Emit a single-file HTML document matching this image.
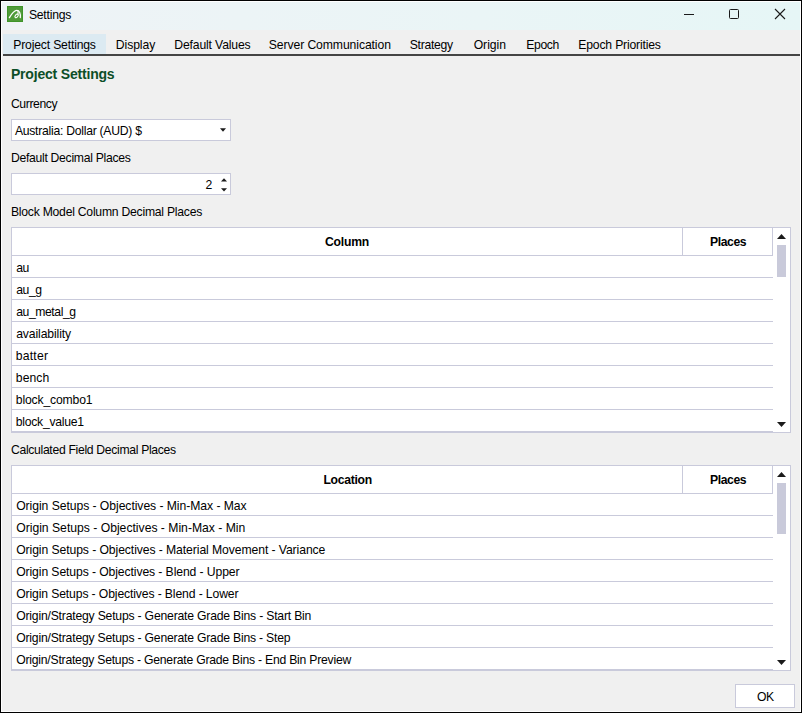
<!DOCTYPE html>
<html><head><meta charset="utf-8">
<style>
*{margin:0;padding:0;box-sizing:border-box}
html,body{width:802px;height:713px;overflow:hidden;background:#000}
body{position:relative;font-family:"Liberation Sans",sans-serif;color:#1a1a1a}
.a{position:absolute}
.t{position:absolute;white-space:nowrap;line-height:16px}
.win{position:absolute;left:1px;top:1px;width:800px;height:711px;background:#fff}
.inner{position:absolute;left:2px;top:2px;width:798px;height:709px;background:#f0f0f0}
.title{position:absolute;left:2px;top:2px;width:798px;height:28px;background:linear-gradient(90deg,#eef3f6 0%,#eaf5f6 60%,#e6f6f6 100%)}
.tabsel{position:absolute;left:3px;top:34px;width:103px;height:20px;background:#dceaf2}
.tabline{position:absolute;left:3px;top:54px;width:797px;height:2px;background:#454545}
.box{position:absolute;background:#fff;border:1px solid #c9cadb}
.hline{position:absolute;height:1px;background:#c9cadb}
.vline{position:absolute;width:1px;background:#c9cadb}
</style></head><body>
<div class="win"></div>
<div class="inner"></div>
<div class="title"></div>
<svg class="a" style="left:7px;top:6px" width="16" height="16" viewBox="0 0 16 16">
<rect x="0" y="0" width="16" height="16" fill="#4f9b39"/>
<rect x="0.5" y="0.5" width="15" height="15" fill="none" stroke="#3f942a" stroke-width="1"/>
<path d="M2.4 11.6 C4.5 8 7 4.3 9.8 4.3 C12.5 4.3 13.6 7.5 13.3 11.5" fill="none" stroke="#fff" stroke-width="1.3" stroke-linecap="round"/>
<ellipse cx="9.6" cy="9.9" rx="2.1" ry="1.25" transform="rotate(-50 9.6 9.9)" fill="none" stroke="#fff" stroke-width="1.1"/><path d="M10.9 4.8 C11.2 6 11.2 7.2 10.9 8.4" fill="none" stroke="#fff" stroke-width="1.1" stroke-linecap="round"/>
</svg>
<div class="t" style="left:28.92px;top:7.20px;font-size:12.2px;letter-spacing:-0.231px;color:#000">Settings</div>
<div class="a" style="left:684px;top:14px;width:10px;height:1px;background:#1a1a1a"></div>
<div class="a" style="left:729px;top:9px;width:10px;height:10px;border:1px solid #1a1a1a;border-radius:1.5px"></div>
<svg class="a" style="left:774px;top:8px" width="12" height="12" viewBox="0 0 12 12"><path d="M1 1 L11 11 M11 1 L1 11" stroke="#1a1a1a" stroke-width="1.1"/></svg>

<div class="tabsel"></div>
<div class="tabline"></div>
<div class="t" style="left:13.30px;top:36.60px;font-size:12.2px;letter-spacing:-0.180px;color:#000">Project Settings</div>
<div class="t" style="left:115.82px;top:36.60px;font-size:12.2px;letter-spacing:-0.090px;color:#000">Display</div>
<div class="t" style="left:174.30px;top:36.60px;font-size:12.2px;letter-spacing:-0.152px;color:#000">Default Values</div>
<div class="t" style="left:268.80px;top:36.60px;font-size:12.2px;letter-spacing:-0.095px;color:#000">Server Communication</div>
<div class="t" style="left:409.72px;top:36.60px;font-size:12.2px;letter-spacing:-0.283px;color:#000">Strategy</div>
<div class="t" style="left:473.70px;top:36.60px;font-size:12.2px;letter-spacing:-0.050px;color:#000">Origin</div>
<div class="t" style="left:526.30px;top:36.60px;font-size:12.2px;letter-spacing:-0.400px;color:#000">Epoch</div>
<div class="t" style="left:578.28px;top:36.60px;font-size:12.2px;letter-spacing:-0.180px;color:#000">Epoch Priorities</div>
<div class="t" style="left:10.94px;top:65.50px;font-size:14.0px;font-weight:bold;letter-spacing:-0.192px;color:#0c4e27">Project Settings</div>
<div class="t" style="left:10.94px;top:95.90px;font-size:12.2px;letter-spacing:-0.400px;color:#000">Currency</div>
<div class="box" style="left:11px;top:119px;width:220px;height:22px"></div>
<div class="t" style="left:14.90px;top:123.20px;font-size:12.2px;letter-spacing:-0.263px;color:#000">Australia: Dollar (AUD) $</div>
<svg class="a" style="left:220px;top:128px" width="6" height="4" viewBox="0 0 6 4"><path d="M0 0.2 H6 L3 3.8Z" fill="#1a1a1a"/></svg>
<div class="t" style="left:10.94px;top:149.70px;font-size:12.2px;letter-spacing:-0.291px;color:#000">Default Decimal Places</div>
<div class="box" style="left:11px;top:173px;width:220px;height:22px"></div>
<div class="t" style="left:205.44px;top:177.00px;font-size:12.2px;letter-spacing:0.000px;color:#000">2</div>
<svg class="a" style="left:221px;top:178px" width="6" height="4" viewBox="0 0 6 4"><path d="M0 3.4 H6 L3 0.2Z" fill="#1a1a1a"/></svg>
<svg class="a" style="left:221px;top:188px" width="6" height="4" viewBox="0 0 6 4"><path d="M0 0.2 H6 L3 3.4Z" fill="#1a1a1a"/></svg>
<div class="t" style="left:10.94px;top:204.00px;font-size:12.2px;letter-spacing:-0.242px;color:#000">Block Model Column Decimal Places</div>
<div class="box" style="left:11px;top:227px;width:780px;height:206px"></div>
<div class="hline" style="left:12px;top:255px;width:761px"></div>
<div class="vline" style="left:682px;top:228px;height:27px"></div>
<div class="vline" style="left:772px;top:228px;height:27px"></div>
<div class="hline" style="left:12px;top:277px;width:761px"></div>
<div class="hline" style="left:12px;top:299px;width:761px"></div>
<div class="hline" style="left:12px;top:321px;width:761px"></div>
<div class="hline" style="left:12px;top:343px;width:761px"></div>
<div class="hline" style="left:12px;top:365px;width:761px"></div>
<div class="hline" style="left:12px;top:387px;width:761px"></div>
<div class="hline" style="left:12px;top:409px;width:761px"></div>
<div class="hline" style="left:12px;top:431px;width:761px"></div>
<div class="t" style="left:324.98px;top:233.60px;font-size:12.2px;font-weight:bold;letter-spacing:-0.216px;color:#000">Column</div>
<div class="t" style="left:709.98px;top:234.00px;font-size:12.2px;font-weight:bold;letter-spacing:-0.400px;color:#000">Places</div>
<svg class="a" style="left:777px;top:234px" width="9" height="5" viewBox="0 0 9 5"><path d="M0 5 H9 L4.5 0Z" fill="#1a1a1a"/></svg>
<div class="a" style="left:777px;top:245px;width:9px;height:32px;background:#c9cada"></div>
<svg class="a" style="left:777px;top:422px" width="9" height="5" viewBox="0 0 9 5"><path d="M0 0 H9 L4.5 5Z" fill="#1a1a1a"/></svg>
<div class="t" style="left:16.18px;top:260.00px;font-size:12.2px;letter-spacing:-0.400px;color:#000">au</div>
<div class="t" style="left:16.18px;top:282.00px;font-size:12.2px;letter-spacing:-0.400px;color:#000">au_g</div>
<div class="t" style="left:16.18px;top:304.00px;font-size:12.2px;letter-spacing:-0.424px;color:#000">au_metal_g</div>
<div class="t" style="left:16.18px;top:326.00px;font-size:12.2px;letter-spacing:-0.118px;color:#000">availability</div>
<div class="t" style="left:15.80px;top:348.00px;font-size:12.2px;letter-spacing:0.209px;color:#000">batter</div>
<div class="t" style="left:15.80px;top:370.00px;font-size:12.2px;letter-spacing:0.081px;color:#000">bench</div>
<div class="t" style="left:15.80px;top:392.00px;font-size:12.2px;letter-spacing:-0.167px;color:#000">block_combo1</div>
<div class="t" style="left:15.80px;top:414.00px;font-size:12.2px;letter-spacing:-0.265px;color:#000">block_value1</div>
<div class="t" style="left:10.94px;top:441.80px;font-size:12.2px;letter-spacing:-0.318px;color:#000">Calculated Field Decimal Places</div>
<div class="box" style="left:11px;top:465px;width:780px;height:206px"></div>
<div class="hline" style="left:12px;top:493px;width:761px"></div>
<div class="vline" style="left:682px;top:466px;height:27px"></div>
<div class="vline" style="left:772px;top:466px;height:27px"></div>
<div class="hline" style="left:12px;top:515px;width:761px"></div>
<div class="hline" style="left:12px;top:537px;width:761px"></div>
<div class="hline" style="left:12px;top:559px;width:761px"></div>
<div class="hline" style="left:12px;top:581px;width:761px"></div>
<div class="hline" style="left:12px;top:603px;width:761px"></div>
<div class="hline" style="left:12px;top:625px;width:761px"></div>
<div class="hline" style="left:12px;top:647px;width:761px"></div>
<div class="hline" style="left:12px;top:669px;width:761px"></div>
<div class="t" style="left:323.42px;top:472.10px;font-size:12.2px;font-weight:bold;letter-spacing:-0.283px;color:#000">Location</div>
<div class="t" style="left:709.98px;top:472.00px;font-size:12.2px;font-weight:bold;letter-spacing:-0.400px;color:#000">Places</div>
<svg class="a" style="left:777px;top:472px" width="9" height="5" viewBox="0 0 9 5"><path d="M0 5 H9 L4.5 0Z" fill="#1a1a1a"/></svg>
<div class="a" style="left:777px;top:483px;width:9px;height:51px;background:#c9cada"></div>
<svg class="a" style="left:777px;top:660px" width="9" height="5" viewBox="0 0 9 5"><path d="M0 0 H9 L4.5 5Z" fill="#1a1a1a"/></svg>
<div class="t" style="left:16.18px;top:498.00px;font-size:12.2px;letter-spacing:-0.062px;color:#000">Origin Setups - Objectives - Min-Max - Max</div>
<div class="t" style="left:16.18px;top:520.00px;font-size:12.2px;letter-spacing:-0.010px;color:#000">Origin Setups - Objectives - Min-Max - Min</div>
<div class="t" style="left:16.18px;top:542.00px;font-size:12.2px;letter-spacing:-0.087px;color:#000">Origin Setups - Objectives - Material Movement - Variance</div>
<div class="t" style="left:16.18px;top:564.00px;font-size:12.2px;letter-spacing:-0.102px;color:#000">Origin Setups - Objectives - Blend - Upper</div>
<div class="t" style="left:16.18px;top:586.00px;font-size:12.2px;letter-spacing:-0.128px;color:#000">Origin Setups - Objectives - Blend - Lower</div>
<div class="t" style="left:16.18px;top:608.00px;font-size:12.2px;letter-spacing:-0.200px;color:#000">Origin/Strategy Setups - Generate Grade Bins - Start Bin</div>
<div class="t" style="left:16.18px;top:630.00px;font-size:12.2px;letter-spacing:-0.202px;color:#000">Origin/Strategy Setups - Generate Grade Bins - Step</div>
<div class="t" style="left:16.18px;top:652.00px;font-size:12.2px;letter-spacing:-0.225px;color:#000">Origin/Strategy Setups - Generate Grade Bins - End Bin Preview</div>
<div class="box" style="left:735px;top:684px;width:60px;height:24px"></div>
<div class="t" style="left:756.92px;top:688.80px;font-size:12.2px;letter-spacing:-0.300px;color:#000">OK</div>
</body></html>
